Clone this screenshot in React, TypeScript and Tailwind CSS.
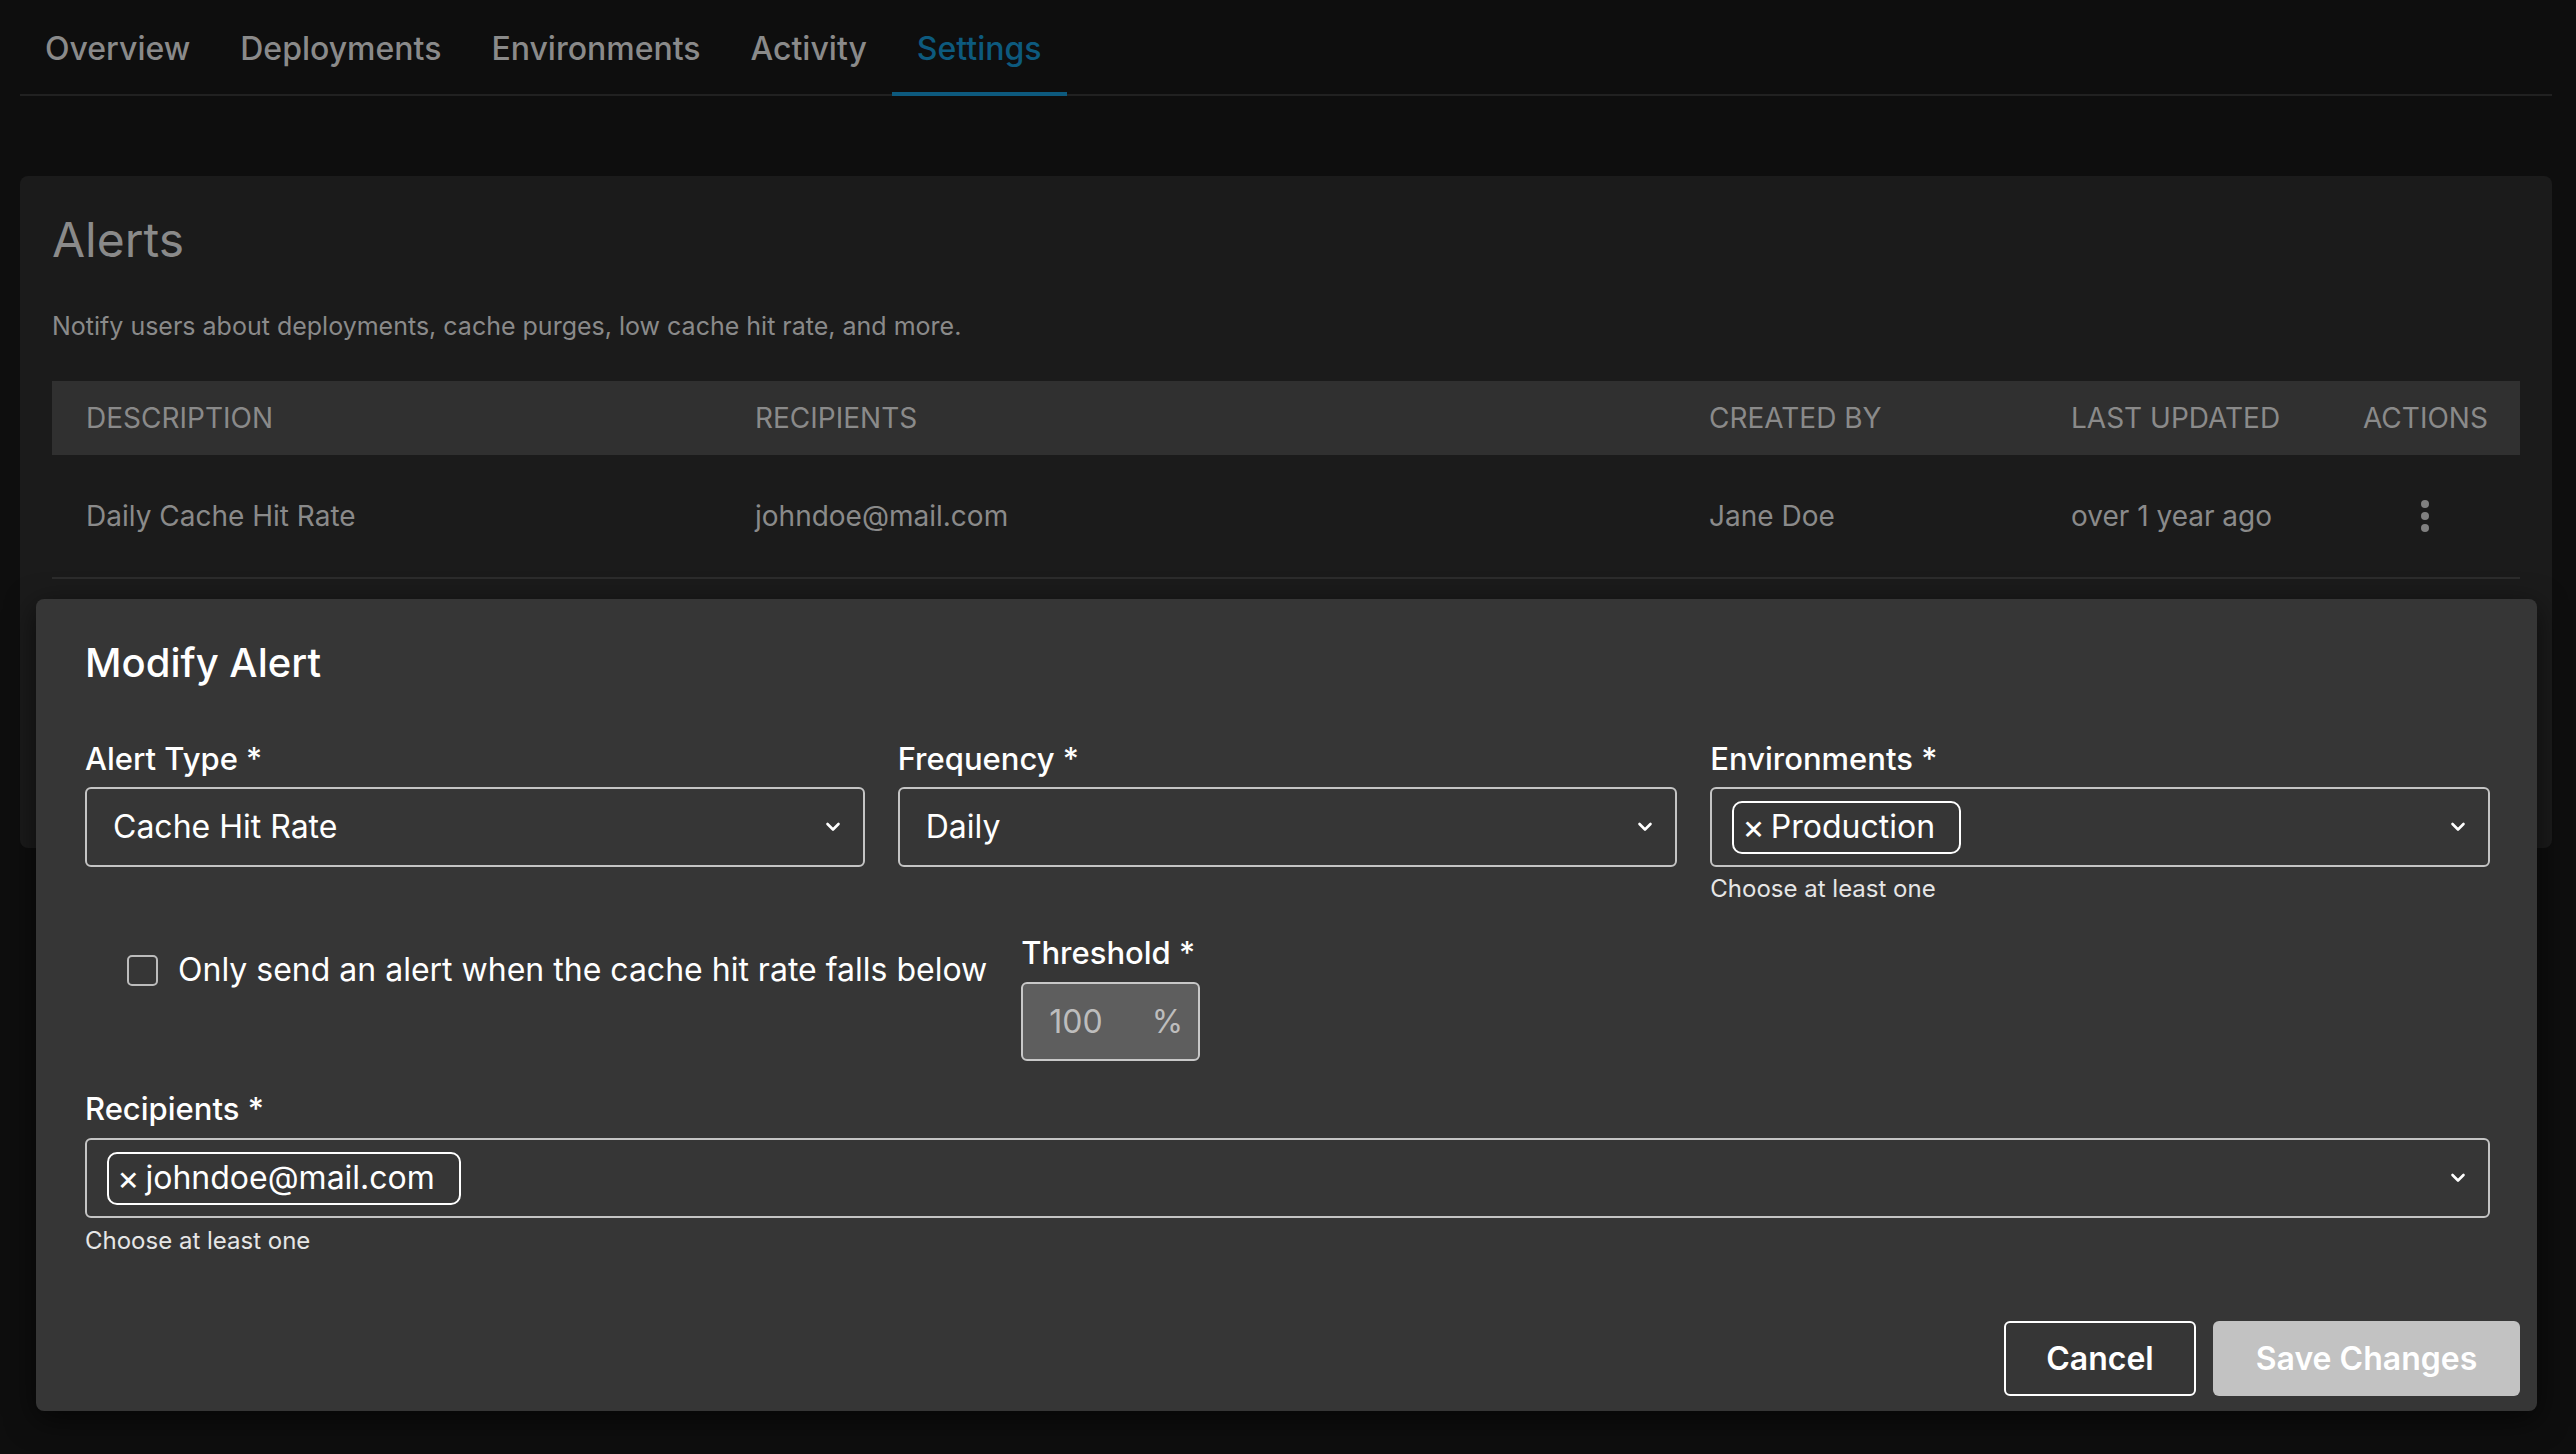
const tabs = ["Overview", "Deployments", "Environments", "Activity", "Settings"];

function Chevron() {
  return (
    <svg width="16" height="12" viewBox="0 0 16 12" fill="none" className="shrink-0">
      <path d="M2.5 3 L8 8.5 L13.5 3" stroke="#ffffff" strokeWidth="2.6" strokeLinecap="round" strokeLinejoin="round" />
    </svg>
  );
}

function Kebab() {
  return (
    <svg width="10" height="34" viewBox="0 0 10 34" fill="#808080">
      <circle cx="5" cy="5" r="4" />
      <circle cx="5" cy="17" r="4" />
      <circle cx="5" cy="29" r="4" />
    </svg>
  );
}

function Label({ children }: { children: React.ReactNode }) {
  return <div className="text-[31px] leading-[40px] font-medium text-white">{children} *</div>;
}

function Chip({ label }: { label: string }) {
  return (
    <span className="flex h-[53px] items-center rounded-[10px] border-2 border-white pl-[8px] pr-[24px] text-[32px] leading-[40px] text-white">
      <span className="mr-[6px] text-[34px]">×</span>
      {label}
    </span>
  );
}

function SelectBox({ children }: { children: React.ReactNode }) {
  return (
    <div className="flex h-[80px] items-center justify-between rounded-[6px] border-2 border-[#c4c4c4] pl-[26px] pr-[22px] text-[32px] leading-[40px] text-white">
      <div className="flex items-center">{children}</div>
      <Chevron />
    </div>
  );
}

function ChipBox({ label }: { label: string }) {
  return (
    <div className="flex h-[80px] items-center justify-between rounded-[6px] border-2 border-[#c4c4c4] pl-[20px] pr-[22px]">
      <Chip label={label} />
      <Chevron />
    </div>
  );
}

export default function App() {
  return (
    <div className="relative h-[1454px] w-full overflow-hidden bg-[#0e0e0e] pl-[20px] pr-[24px] font-['Inter',sans-serif]">
      <nav className="flex border-b-2 border-[#212121]">
        {tabs.map((t) => (
          <div
            key={t}
            className={
              t === "Settings"
                ? "-mb-[2px] border-b-4 border-[#0d5a7e] px-[25px] pt-[29px] pb-[23px] text-[32px] leading-[40px] font-medium text-[#0d5a7e]"
                : "-mb-[2px] border-b-4 border-transparent px-[25px] pt-[29px] pb-[23px] text-[32px] leading-[40px] font-medium text-[#8a8a8a]"
            }
          >
            {t}
          </div>
        ))}
      </nav>

      <section className="mt-[80px] h-[672px] rounded-[8px] bg-[#1b1b1b] px-[32px] pt-[36px]">
        <h1 className="text-[48px] leading-[56px] font-normal text-[#8a8a8a]">Alerts</h1>
        <p className="mt-[42px] text-[25px] leading-[32px] text-[#8a8a8a]">
          Notify users about deployments, cache purges, low cache hit rate, and more.
        </p>
        <div className="mt-[39px] text-[28px] leading-[36px] text-[#8a8a8a]">
          <div className="grid h-[74px] grid-cols-[669px_954px_362px_292px_1fr] items-center bg-[#303030] uppercase">
            <div className="px-[34px]">Description</div>
            <div className="px-[34px]">Recipients</div>
            <div className="px-[34px]">Created By</div>
            <div className="px-[34px]">Last Updated</div>
            <div className="px-[34px]">Actions</div>
          </div>
          <div className="grid h-[124px] grid-cols-[669px_954px_362px_292px_1fr] items-center border-b-2 border-[#2c2c2c]">
            <div className="px-[34px]">Daily Cache Hit Rate</div>
            <div className="px-[34px]">johndoe@mail.com</div>
            <div className="px-[34px]">Jane Doe</div>
            <div className="px-[34px]">over 1 year ago</div>
            <div className="flex justify-center px-[34px]">
              <Kebab />
            </div>
          </div>
        </div>
      </section>

      <div className="absolute left-[36px] top-[599px] h-[812px] w-[2501px] rounded-[8px] bg-[#363636] pl-[49px] pr-[17px] pt-[41px] shadow-[0_8px_30px_rgba(0,0,0,0.6)]">
        <div className="pr-[30px]">
          <h2 className="text-[40px] leading-[46px] font-medium text-white">Modify Alert</h2>

          <div className="mt-[53px] grid grid-cols-3 gap-x-[33px]">
            <div>
              <Label>Alert Type</Label>
              <div className="mt-[8px]">
                <SelectBox>Cache Hit Rate</SelectBox>
              </div>
            </div>
            <div>
              <Label>Frequency</Label>
              <div className="mt-[8px]">
                <SelectBox>Daily</SelectBox>
              </div>
            </div>
            <div>
              <Label>Environments</Label>
              <div className="mt-[8px]">
                <ChipBox label="Production" />
              </div>
              <div className="mt-[6px] text-[24px] leading-[32px] text-[#e6e6e6]">Choose at least one</div>
            </div>
          </div>

          <div className="mt-[28px] flex items-start">
            <label className="ml-[42px] mt-[17px] flex items-center gap-[20px] text-[32px] leading-[40px] text-white">
              <span className="h-[31px] w-[31px] rounded-[5px] border-2 border-[#bcbcbc]" />
              Only send an alert when the cache hit rate falls below
            </label>
            <div className="ml-[34px]">
              <Label>Threshold</Label>
              <div className="mt-[9px] flex h-[79px] w-[179px] items-center justify-between rounded-[6px] border-2 border-[#c8c8c8] bg-[#5e5e5e] pl-[26px] pr-[15px] text-[32px] leading-[40px] text-[#bdbdbd]">
                <span>100</span>
                <span>%</span>
              </div>
            </div>
          </div>

          <div className="mt-[28px]">
            <Label>Recipients</Label>
            <div className="mt-[9px]">
              <ChipBox label="johndoe@mail.com" />
            </div>
            <div className="mt-[7px] text-[24px] leading-[32px] text-[#e6e6e6]">Choose at least one</div>
          </div>
        </div>

        <div className="mt-[64px] flex justify-end gap-[17px]">
          <button className="h-[75px] w-[192px] rounded-[6px] border-2 border-white text-[32px] font-semibold text-white">
            Cancel
          </button>
          <button className="h-[75px] w-[307px] rounded-[6px] bg-[#c2c2c2] text-[32px] font-semibold text-white">
            Save Changes
          </button>
        </div>
      </div>
    </div>
  );
}
